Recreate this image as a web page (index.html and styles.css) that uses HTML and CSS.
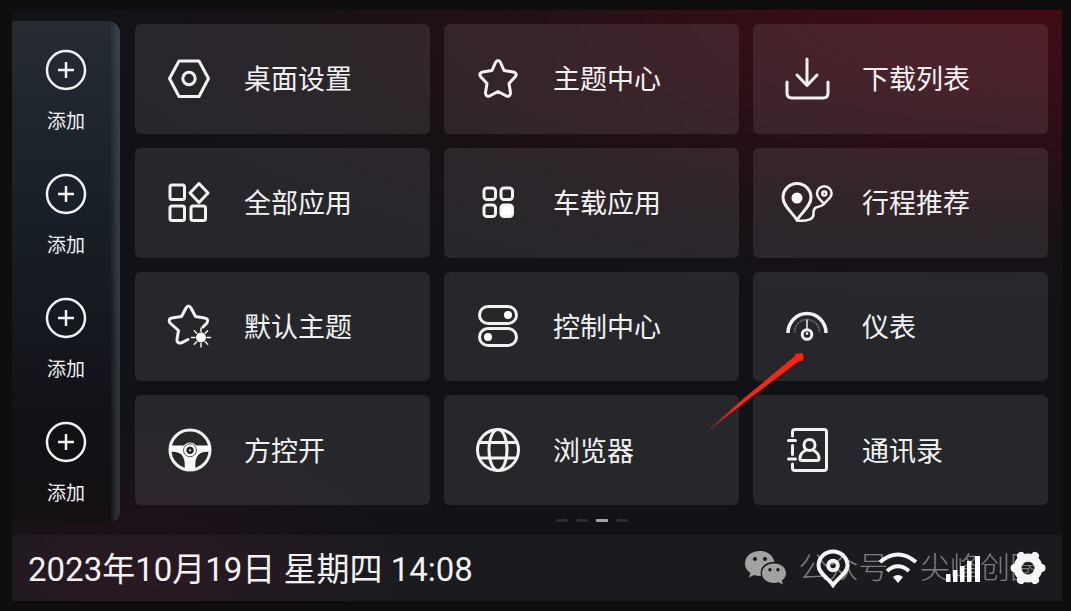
FILE: index.html
```html
<!DOCTYPE html>
<html lang="zh-CN">
<head>
  <meta charset="UTF-8" />
  <meta name="viewport" content="width=device-width, initial-scale=1.0"/>
  <title>车载桌面</title>
  <link rel="stylesheet" href="styles.css">
</head>
<body>

  <svg class="sprite" aria-hidden="true">
    <symbol id="icon-add" viewBox="0 0 42 42">
      <circle cx="21" cy="21" r="19"/>
      <path d="M21 13v16M13 21h16"/>
    </symbol>
  </svg>

  <div class="screen">
    <div class="content">
      <aside class="sidebar">
        <button type="button" class="add"><svg class="add-icon"><use href="#icon-add"/></svg>添加</button>
        <button type="button" class="add"><svg class="add-icon"><use href="#icon-add"/></svg>添加</button>
        <button type="button" class="add"><svg class="add-icon"><use href="#icon-add"/></svg>添加</button>
        <button type="button" class="add"><svg class="add-icon"><use href="#icon-add"/></svg>添加</button>
      </aside>

      <main class="main">
        <div class="tiles">
          <button type="button" class="tile">
            <svg class="icon" viewBox="0 0 56 56">
              <path d="M18 10h20l9.500 17.500L38 45.500H18L8.500 27.500z"/>
              <circle cx="28" cy="27.500" r="6.200"/>
            </svg>
            <span class="label">桌面设置</span>
          </button>
          <button type="button" class="tile">
            <svg class="icon" viewBox="0 0 56 56">
              <path d="M25.500 11.500Q28 7.500 30.500 11.500L34 19.500L43.500 21Q48 22.500 45 26L39 32.500L40.500 41.500Q40.500 46.500 36 44.800L28 40.500L20 44.800Q15.500 46.500 15.500 41.500L17 32.500L11 26Q8 22.500 12.500 21L22 19.500Z"/>
            </svg>
            <span class="label">主题中心</span>
          </button>
          <button type="button" class="tile">
            <svg class="icon" viewBox="0 0 56 56">
              <path d="M28 8v26M18 24l10 10.500L38 24M8 31v11q0 5 5 5h31q5 0 5-5V31"/>
            </svg>
            <span class="label">下载列表</span>
          </button>

          <button type="button" class="tile">
            <svg class="icon" viewBox="0 0 56 56">
              <rect x="9" y="10" width="14.500" height="14.500" rx="2"/>
              <rect x="9" y="31" width="14.500" height="14.500" rx="2"/>
              <rect x="30" y="31" width="14.500" height="14.500" rx="2"/>
              <path d="M38 8.500l9 9.500l-9 9.500l-9-9.500z"/>
            </svg>
            <span class="label">全部应用</span>
          </button>
          <button type="button" class="tile">
            <svg class="icon" viewBox="0 0 56 56">
              <rect x="14" y="13" width="11.500" height="11.500" rx="3"/>
              <rect x="31" y="13" width="11.500" height="11.500" rx="3"/>
              <rect x="14" y="30" width="11.500" height="11.500" rx="3"/>
              <rect class="solid" x="31" y="30" width="11.500" height="11.500" rx="3"/>
            </svg>
            <span class="label">车载应用</span>
          </button>
          <button type="button" class="tile">
            <svg class="icon" viewBox="0 0 56 56">
              <path d="M18 45C13 37 4 31 4 22.500a14 14 0 0 1 28 0C32 31 23 37 18 45z"/>
              <circle class="fill" cx="18" cy="23" r="5.500"/>
              <g class="thin">
                <path d="M18 45.500c10 1 17-1 16.500-7c-.5-9 7-5 10.500-9.500c-3-4-7-6-7-10.500a7.300 7.300 0 0 1 14.600 0c0 4.500-4.600 6.500-7.600 10.500"/>
                <circle cx="45.300" cy="18.500" r="2"/>
              </g>
            </svg>
            <span class="label">行程推荐</span>
          </button>

          <button type="button" class="tile">
            <svg class="icon" viewBox="0 0 56 56">
              <path d="M27 41.500L20.500 44.800Q15.500 46 16 41L17.500 32.500L9 25Q6.500 20.500 11 20L20.500 18.500L25 10Q27.500 6 30 10L34.500 18.500L43.500 20Q48 20.500 46 25L42 29"/>
              <circle class="fill" cx="40" cy="39.500" r="5"/>
              <path class="ray" d="M40 30v3.500M40 45.500V49M30.500 39.500H34M46 39.500h3.500M33.300 32.800l2.400 2.400M44.300 43.800l2.400 2.400M33.300 46.200l2.400-2.400M44.300 35.200l2.400-2.400"/>
            </svg>
            <span class="label">默认主题</span>
          </button>
          <button type="button" class="tile">
            <svg class="icon" viewBox="0 0 56 56">
              <rect x="9.500" y="8.500" width="37" height="17" rx="8.500"/>
              <rect x="9.500" y="30.500" width="37" height="17" rx="8.500"/>
              <circle class="fill" cx="38" cy="17" r="4"/>
              <circle class="fill" cx="18" cy="39" r="4"/>
            </svg>
            <span class="label">控制中心</span>
          </button>
          <button type="button" class="tile">
            <svg class="icon" viewBox="0 0 56 56">
              <path class="bold" d="M9 35a19 19.500 0 0 1 38 0"/>
              <path class="dial" d="M15.500 34.500a12.500 13 0 0 1 25 0"/>
              <path class="ray" d="M28 22v10"/>
              <circle cx="28" cy="36.500" r="4.800"/>
              <circle class="fill" cx="28" cy="35.500" r="1.300"/>
            </svg>
            <span class="label">仪表</span>
          </button>

          <button type="button" class="tile">
            <svg class="icon" viewBox="0 0 56 56">
              <circle cx="29" cy="28" r="20"/>
              <path class="fill" fill-rule="evenodd" d="M9 23.500h14a7.500 7.500 0 0 1 12 0h14v6l-6 .5q-7 1-8.500 9l-.5 9h-10l-.5-9q-1.500-8-8.500-9l-6-.5zM29 24.500a3.800 3.800 0 1 0 .1 0z"/>
              <circle class="groove" cx="29" cy="28.300" r="6.500"/>
              <circle class="fill" cx="29" cy="28.300" r="1"/>
            </svg>
            <span class="label">方控开</span>
          </button>
          <button type="button" class="tile">
            <svg class="icon" viewBox="0 0 56 56">
              <circle cx="28" cy="28" r="20.500"/>
              <ellipse cx="28" cy="28" rx="9" ry="20.500"/>
              <path d="M10 20.500h36M10 36h36"/>
            </svg>
            <span class="label">浏览器</span>
          </button>
          <button type="button" class="tile">
            <svg class="icon" viewBox="0 0 56 56">
              <path d="M13.500 14V10q0-2.500 2.500-2.500h29q2.500 0 2.500 2.500v36q0 2.500-2.500 2.500H16q-2.500 0-2.500-2.500v-4M13.500 23.500v9M9.500 18.500h7M9.500 37h7"/>
              <circle cx="30.500" cy="23" r="5.500"/>
              <path d="M27 28q-6 3-6 8.500q0 2 2 2h15q2 0 2-2q0-5.500-6-8.500"/>
            </svg>
            <span class="label">通讯录</span>
          </button>
        </div>

        <div class="pager">
          <span class="page"></span>
          <span class="page"></span>
          <span class="page active"></span>
          <span class="page"></span>
        </div>

        <svg class="pointer" viewBox="0 0 102 82" aria-hidden="true">
          <defs>
            <linearGradient id="pointerFade" x1="0" y1="1" x2="1" y2="0">
              <stop offset="0" stop-color="#ff2412" stop-opacity=".3"/>
              <stop offset=".3" stop-color="#ff2412"/>
            </linearGradient>
          </defs>
          <path fill="url(#pointerFade)" d="M0 82L40 46L92 3L92 1L99 0Q102 4 99 8L96 8L42 49Z"/>
        </svg>
      </main>
    </div>

    <footer class="statusbar">
      <time class="clock" datetime="2023-10-19T14:08">2023年10月19日 星期四 14:08</time>

      <div class="watermark">
        <svg class="wechat" viewBox="0 0 42 34">
          <path fill-rule="evenodd" d="M15 0C6 0 0 5.500 0 12.500c0 4 2 7.500 5.500 9.500L4 26.500l5-2.500q3 1 7 1C14 16 21 10.500 29.500 11C28 4.500 22.500 0 15 0zM10 6a2 2 0 1 1-.1 0zM20 6a2 2 0 1 1-.1 0z"/>
          <path fill-rule="evenodd" d="M29 12.500c-7 0-12 4.300-12 9.800s5 9.700 12 9.700q2.500 0 4.500-.7L38 33.500l-1.300-4q4.300-3 4.300-7.200c0-5.500-5-9.800-12-9.800zM25 17a1.700 1.700 0 1 1-.1 0zM33 17a1.700 1.700 0 1 1-.1 0z"/>
        </svg>
        <span>公众号</span>
        <span>·</span>
        <span>尖峰创圈</span>
      </div>

      <div class="status-icons">
        <svg class="status-icon" viewBox="0 0 40 40">
          <path d="M20 37C15 30 5.500 25 5.500 17.500a14.500 14 0 0 1 29 0C34.500 25 25 30 20 37z"/>
          <circle cx="20" cy="17.500" r="4.800"/>
        </svg>
        <svg class="status-icon" viewBox="0 0 40 40">
          <path d="M2 14q18-15 36 0M9 23q11-9.500 22 0"/>
          <path class="fill" d="M15 29q5-4 10 0l-5 6z"/>
        </svg>
        <svg class="status-icon" viewBox="0 0 40 40">
          <path class="fill" d="M3 26h4.500v8H3zM10 22h4.500v12H10zM17 18h4.500v16H17zM24 13h4.500v21H24zM32 8h5v26h-5z"/>
        </svg>
        <svg class="status-icon" viewBox="0 0 40 40">
          <circle class="gear" cx="20" cy="20" r="10.500"/>
          <path class="teeth" d="M31 20h2.500M25.500 29.500l1.500 2.600M14.500 29.500l-1.500 2.600M9 20H6.500M14.500 10.500L13 7.900M25.500 10.500L27 7.900"/>
        </svg>
      </div>
    </footer>
  </div>

</body>
</html>
```

FILE: styles.css
```css
* {
  box-sizing: border-box;
}

body {
  margin: 0;
  min-height: 100vh;
  padding: 10px 9px 10px 12px;
  display: flex;
  background-color: #0e0e0e;
  color: #f2f2f2;
  font-family: Roboto, "Noto Sans CJK SC", sans-serif;
}

button {
  border: none;
  padding: 0;
  background: none;
  color: inherit;
  font-family: inherit;
  cursor: pointer;
}

.sprite {
  display: none;
}

.screen {
  flex: 1;
  display: flex;
  flex-direction: column;
  background:
    radial-gradient(ellipse 96% 52% at 100% 0, #400c14 0%, #3a0d16 20%, #260f15 50%, rgba(28, 16, 21, 0.7) 72%, transparent 100%),
    radial-gradient(ellipse 26% 28% at 12% 96%, #21101a 0%, transparent 100%),
    #111216;
}

.content {
  flex: 1;
  display: flex;
}

/* left shortcut column */
.sidebar {
  width: 108px;
  margin: 11px 0 12px;
  padding: 3px 0;
  display: flex;
  flex-direction: column;
  border-radius: 0 12px 12px 0;
  background:
    linear-gradient(to left, rgba(90, 105, 115, 0.4), rgba(90, 105, 115, 0.3) 4px, transparent 10px),
    linear-gradient(#262b32, #1b222a 30%, #14181f 60%, #121115 80%, #131013);
}

.add {
  flex: 1;
  padding-top: 10px;
  display: flex;
  flex-direction: column;
  align-items: center;
  justify-content: center;
  gap: 19px;
  font-size: 19px;
  line-height: 24px;
}

.add-icon {
  width: 42px;
  height: 42px;
  fill: none;
  stroke: #f2f2f2;
  stroke-width: 2.5;
}

/* app tiles */
.main {
  position: relative;
  flex: 1;
  display: flex;
  flex-direction: column;
  padding: 14px 14px 0 15px;
}

.tiles {
  flex: 1;
  display: grid;
  grid-template-columns: repeat(3, 1fr);
  grid-template-rows: repeat(4, 1fr);
  gap: 14px;
}

.tile {
  display: flex;
  align-items: center;
  gap: 27px;
  padding-left: 26px;
  border-radius: 6px;
  background-color: rgba(255, 255, 255, 0.09);
  font-size: 27px;
  line-height: 36px;
}

.label {
  padding-top: 3px;
}

.icon {
  width: 56px;
  height: 56px;
  fill: none;
  stroke: #f2f2f2;
  stroke-width: 3;
  stroke-linecap: round;
  stroke-linejoin: round;
}

.icon .fill,
.status-icon .fill {
  fill: #fff;
  stroke: none;
}

.icon .solid {
  fill: #fff;
}

.icon .thin {
  stroke-width: 2.5;
}

.icon .bold {
  stroke-width: 3.5;
  stroke-linecap: butt;
}

.icon .ray {
  stroke-width: 1.5;
}

.icon .dial {
  stroke: #77787b;
  stroke-width: 1.5;
  stroke-dasharray: 2 1;
  stroke-linecap: butt;
}

.icon .groove {
  stroke: #55565a;
  stroke-width: 1;
}

.pager {
  height: 30px;
  display: flex;
  align-items: center;
  justify-content: center;
  gap: 8px;
}

.page {
  width: 12px;
  height: 3px;
  border-radius: 1px;
  background-color: #2c2d31;
}

.page.active {
  background-color: #a5a5a7;
}

/* red pointer drawn over the tiles */
.pointer {
  position: absolute;
  top: 343px;
  right: 257px;
  width: 102px;
  height: 82px;
  pointer-events: none;
}

/* bottom bar */
.statusbar {
  position: relative;
  height: 66px;
  padding: 0 14px 0 16px;
  display: flex;
  align-items: center;
  justify-content: space-between;
  background-color: rgba(255, 255, 255, 0.04);
}

.clock {
  padding-top: 3px;
  font-size: 33px;
  line-height: 40px;
}

.status-icons {
  display: flex;
  gap: 25px;
  z-index: 1;
}

.status-icon {
  width: 40px;
  height: 40px;
  fill: none;
  stroke: #f5f5f5;
  stroke-width: 4;
}

.status-icon .gear {
  stroke-width: 8;
}

.status-icon .teeth {
  stroke-width: 8;
  stroke-linecap: round;
}

.watermark {
  position: absolute;
  top: 12px;
  right: 22px;
  display: flex;
  align-items: center;
  gap: 12px;
  color: rgba(140, 140, 142, 0.9);
  font-size: 30px;
  font-weight: 300;
  line-height: 42px;
  white-space: nowrap;
}

.wechat {
  width: 42px;
  height: 34px;
  fill: #a2a2a3;
}
```
